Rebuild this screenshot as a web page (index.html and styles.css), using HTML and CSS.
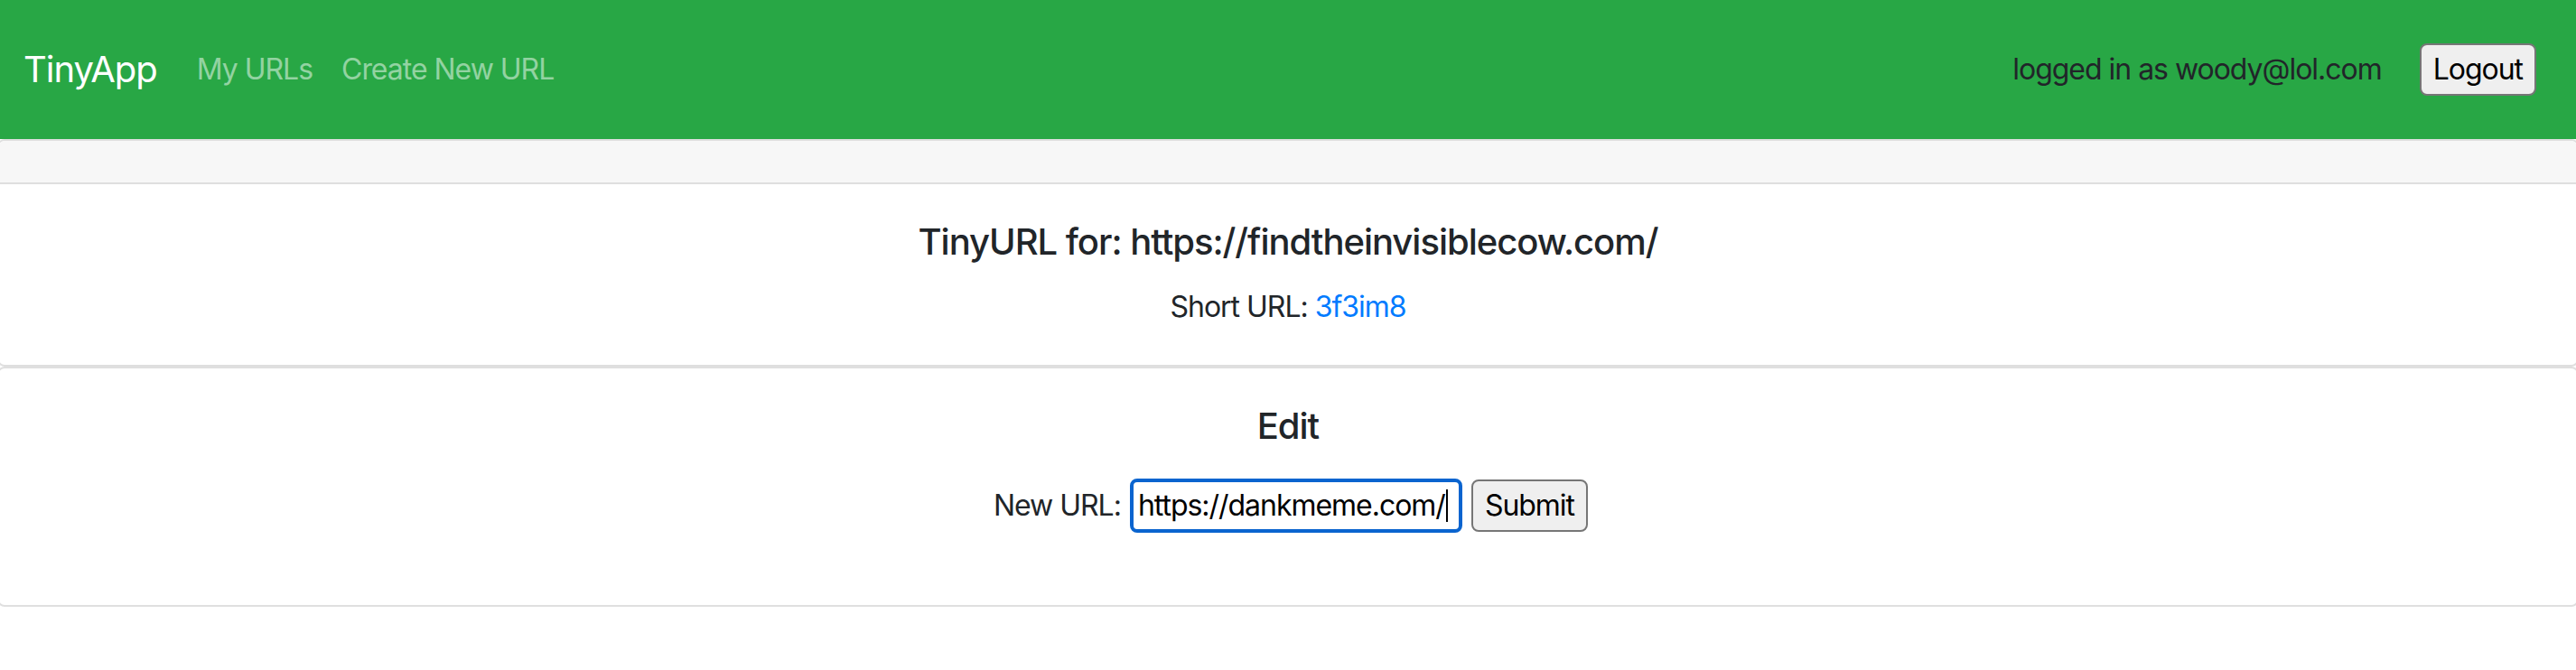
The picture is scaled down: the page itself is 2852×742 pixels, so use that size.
FILE: index.html
```html
<!DOCTYPE html>
<html lang="en">
<head>
<meta charset="utf-8">
<title>TinyApp</title>
<link rel="stylesheet" href="styles.css">
</head>
<body>
  <nav class="navbar">
    <div class="nav-left">
      <a class="brand" href="#">TinyApp</a>
      <a class="nav-link" href="#">My URLs</a>
      <a class="nav-link" href="#">Create New URL</a>
    </div>
    <div class="nav-right">
      <span class="user-text">logged in as woody@lol.com</span>
      <button class="btn" type="button">Logout</button>
    </div>
  </nav>

  <main class="cards">
    <div class="card">
      <div class="card-header"></div>
      <div class="card-body">
        <h5 class="card-title">TinyURL for: https://findtheinvisiblecow.com/</h5>
        <p class="card-text">Short URL: <a class="link" href="#">3f3im8</a></p>
      </div>
    </div>

    <div class="card">
      <div class="card-body">
        <h5 class="card-title">Edit</h5>
        <form class="edit-form">
          <label class="form-label" for="newurl">New URL:</label>
          <span class="input-wrap"><input id="newurl" class="url-input" type="text" value="https://dankmeme.com/"></span>
          <button class="btn" type="button">Submit</button>
        </form>
      </div>
    </div>
  </main>
</body>
</html>
```

FILE: styles.css
```css
* {
  box-sizing: border-box;
}

html, body {
  margin: 0;
  padding: 0;
  background: #ffffff;
}

body {
  font-family: Inter, "Noto Sans", "Liberation Sans", sans-serif;
  font-size: 32px;
  line-height: 1.5;
  letter-spacing: -0.032em;
  color: #212529;
  overflow: hidden;
}

.navbar {
  height: 154px;
  background: #28a745;
  display: flex;
  align-items: center;
  justify-content: space-between;
  padding: 0 44px 0 26px;
}

.nav-left {
  display: flex;
  align-items: center;
}

.brand {
  font-size: 40px;
  color: #ffffff;
  text-decoration: none;
  margin-right: 44px;
}

.nav-link {
  color: rgba(255, 255, 255, 0.5);
  text-decoration: none;
  margin-right: 32px;
}

.nav-right {
  display: flex;
  align-items: center;
  gap: 42px;
}

.user-text {
  color: #212529;
}

.btn {
  font-family: inherit;
  font-size: 32px;
  letter-spacing: -0.032em;
  line-height: 48px;
  color: #000000;
  background: #efefef;
  border: 2px solid #767676;
  border-radius: 8px;
  padding: 2px 13px;
  height: 58px;
}

.cards {
  margin: 0 -3px;
}

.card {
  border: 2px solid #dfdfdf;
  border-radius: 8px;
  text-align: center;
}

.card-header {
  height: 48px;
  background: #f7f7f7;
  border-bottom: 2px solid #dfdfdf;
  border-radius: 6px 6px 0 0;
}

.card-body {
  padding: 40px;
}

.card-title {
  margin: 0 0 24px;
  font-size: 40px;
  font-weight: 500;
  line-height: 48px;
}

.card-text {
  margin: 0;
  line-height: 48px;
}

.link {
  color: #007bff;
  text-decoration: none;
}

.edit-form {
  display: flex;
  justify-content: center;
  align-items: center;
  gap: 10px;
  padding-top: 9px;
  padding-left: 6px;
  height: 70px;
  margin: 0 0 40px;
}

.form-label {
  color: #212529;
}

.input-wrap {
  position: relative;
  display: inline-flex;
}

.input-wrap::after {
  content: "";
  position: absolute;
  right: 16px;
  top: 12px;
  width: 2px;
  height: 36px;
  background: #000000;
}

.url-input {
  width: 368px;
  height: 60px;
  border: 4px solid #0a64cf;
  border-radius: 8px;
  padding: 0 5px;
  font-family: inherit;
  font-size: 32px;
  letter-spacing: -0.032em;
  color: #000000;
  outline: none;
  background: #ffffff;
}
```
